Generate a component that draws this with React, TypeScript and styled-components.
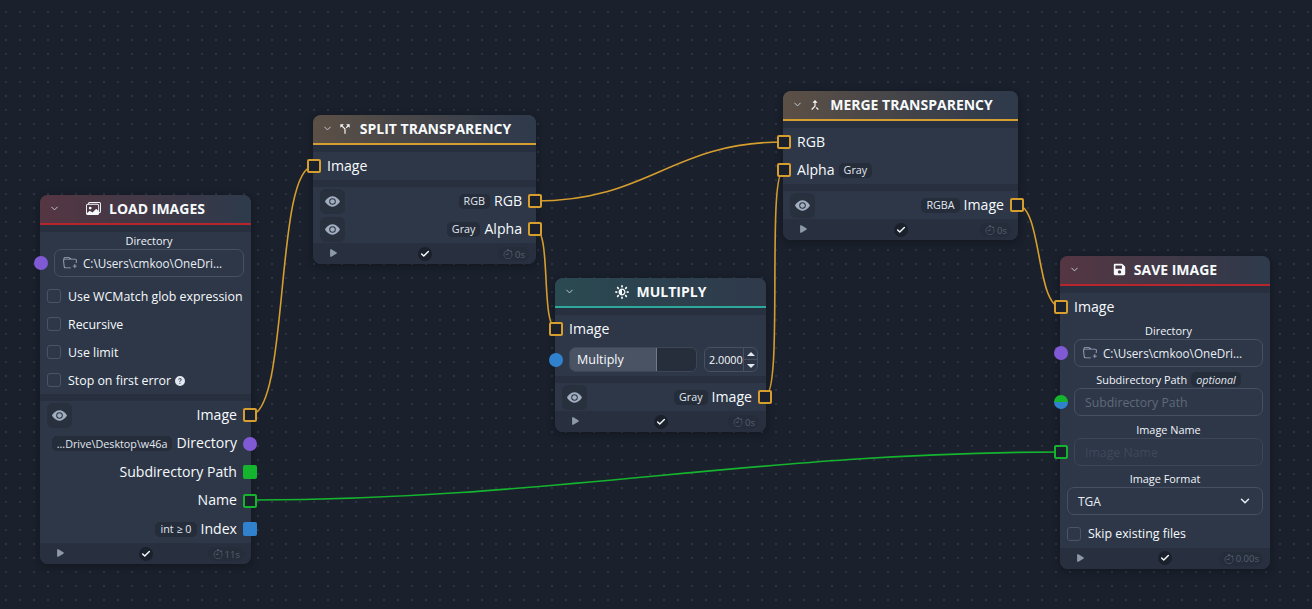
import React from "react";
import styled, { createGlobalStyle } from "styled-components";
import { ChevronDown, Play, Check } from "lucide-react";
import { BsFolderPlus, BsEyeFill, BsStopwatch, BsImages, BsQuestionCircleFill } from "react-icons/bs";
import { MdCallSplit, MdCallMerge } from "react-icons/md";
import { ImBrightnessContrast } from "react-icons/im";
import { FaSave } from "react-icons/fa";

const Global = createGlobalStyle`
  html, body { margin: 0; padding: 0; width: 1312px; height: 609px; overflow: hidden; background: #1a202c; }
  * { box-sizing: border-box; }
`;

const Canvas = styled.div`
  position: relative;
  width: 1312px;
  height: 609px;
  overflow: hidden;
  font-family: "Open Sans", "Liberation Sans", sans-serif;
  color: #f7fafc;
  background-color: #1a202c;
  background-image: radial-gradient(circle at 1px 1px, #333b49 0.6px, transparent 1px);
  background-size: 14px 14px;
  background-position: 5px 11px;
`;

const Wires = styled.svg`
  position: absolute;
  inset: 0;
  width: 1312px;
  height: 609px;
`;

const Node = styled.div<{ $x: number; $y: number; $w: number }>`
  position: absolute;
  left: ${(p) => p.$x}px;
  top: ${(p) => p.$y}px;
  width: ${(p) => p.$w}px;
  display: flex;
  flex-direction: column;
  background: #2d3748;
  border-radius: 8px;
  box-shadow: 0 2px 8px rgba(0, 0, 0, 0.3);
`;

const Header = styled.div<{ $accent: string; $tint: string }>`
  position: relative;
  height: 30px;
  display: flex;
  align-items: center;
  justify-content: center;
  gap: 8px;
  padding-bottom: 1px;
  border-radius: 8px 8px 0 0;
  border-bottom: 2px solid ${(p) => p.$accent};
  background: linear-gradient(90deg, ${(p) => p.$tint} 0%, #2f3a4b 95%);
  font-weight: 700;
  font-size: 14px;
`;

const Collapse = styled.span`
  position: absolute;
  left: 9px;
  top: 8px;
  display: flex;
  color: #cbd5e0;
`;

const Gap = styled.div`
  height: 7px;
  background: #28303f;
`;

const Section = styled.div`
  display: flex;
  flex-direction: column;
`;

const Row = styled.div<{ $h?: number; $right?: boolean }>`
  position: relative;
  height: ${(p) => p.$h ?? 28}px;
  display: flex;
  align-items: center;
  justify-content: ${(p) => (p.$right ? "flex-end" : "flex-start")};
  gap: 4px;
  padding: 0 14px 2px;
  font-size: 14.1px;
  white-space: nowrap;
`;

const SliderRow = styled.div`
  position: relative;
  height: 33px;
  display: flex;
  align-items: center;
  gap: 7px;
  padding: 0 7px 0 14px;
`;

const Chip = styled.span`
  height: 15px;
  display: inline-flex;
  align-items: center;
  margin-top: 2px;
  padding: 0 5px;
  border-radius: 5px;
  background: #252c3a;
  color: #e2e8f0;
  font-size: 10.75px;
  white-space: nowrap;
`;

const Optional = styled(Chip)`
  margin-top: 0;
  font-style: italic;
`;

const Handle = styled.span<{ $side: "left" | "right"; $color: string; $hollow?: boolean; $round?: boolean; $split?: boolean }>`
  position: absolute;
  top: 50%;
  ${(p) => p.$side}: -6px;
  width: 14px;
  height: 14px;
  margin-top: -7px;
  border-radius: ${(p) => (p.$round ? "50%" : "2px")};
  background: ${(p) =>
    p.$split
      ? "linear-gradient(180deg, #15b42e 50%, #3182ce 50%)"
      : p.$hollow
        ? "#1a202c"
        : p.$color};
  border: ${(p) => (p.$hollow ? `2px solid ${p.$color}` : "none")};
`;

const EyeButton = styled.span`
  width: 25px;
  height: 25px;
  display: flex;
  align-items: center;
  justify-content: center;
  border-radius: 6px;
  background: #282f3d;
  color: #a0aec0;
  margin: 2px auto 0 -7px;
`;

const Footer = styled.div`
  position: relative;
  height: 21px;
  display: flex;
  align-items: center;
  justify-content: center;
  background: #28303f;
  border-radius: 0 0 8px 8px;
`;

const PlayMark = styled.span`
  position: absolute;
  left: 15px;
  top: 5px;
  display: flex;
  color: #8d98a8;
`;

const Done = styled.span`
  width: 14px;
  height: 14px;
  display: flex;
  align-items: center;
  justify-content: center;
  border-radius: 50%;
  background: #1a202c;
  color: #f7fafc;
`;

const Time = styled.span`
  position: absolute;
  right: 7px;
  top: 4px;
  height: 14px;
  display: flex;
  align-items: center;
  gap: 2px;
  padding: 0 4px 0 5px;
  border-radius: 7px;
  background: #252c3a;
  color: #566070;
  font-size: 9.5px;
`;

const FieldLabel = styled.div<{ $top?: number; $wide?: boolean }>`
  height: 17px;
  margin-top: ${(p) => p.$top ?? 0}px;
  padding-left: ${(p) => (p.$wide ? 0 : 7)}px;
  display: flex;
  align-items: center;
  justify-content: center;
  gap: 4px;
  font-size: 10.9px;
  color: #f1f5f9;
`;

const Field = styled.div<{ $dim?: boolean }>`
  position: relative;
  height: 28px;
  margin: 0 7px 0 14px;
  display: flex;
  align-items: center;
  gap: 6px;
  padding: 0 8px;
  border: 1px solid #465062;
  border-radius: 7px;
  font-size: 11.7px;
  color: #e8edf3;
  opacity: ${(p) => (p.$dim ? 0.6 : 1)};
`;

const FolderIcon = styled(BsFolderPlus)`
  flex: none;
  color: #a0aec0;
`;

const Placeholder = styled.span<{ $faint?: boolean }>`
  padding-left: 2px;
  font-size: 12.3px;
  color: ${(p) => (p.$faint ? "#4a5566" : "#5f6a7a")};
`;

const Wrap = styled.div`
  position: relative;
`;

const CheckRow = styled.div<{ $top?: number; $h?: number }>`
  height: ${(p) => p.$h ?? 28}px;
  margin-top: ${(p) => p.$top ?? 0}px;
  display: flex;
  align-items: center;
  gap: 7px;
  padding-left: 7px;
  font-size: 12.38px;
  white-space: nowrap;
`;

const Box = styled.span`
  width: 14px;
  height: 14px;
  border: 1.5px solid #4a5466;
  border-radius: 3px;
  flex: none;
`;

const Slider = styled.div`
  width: 128px;
  height: 25px;
  flex: none;
  display: flex;
  border: 1px solid #3d4656;
  border-radius: 6px;
  overflow: hidden;
  background: #272e3b;
  font-size: 12.5px;
`;

const SliderFill = styled.div`
  width: 87px;
  display: flex;
  align-items: center;
  padding-left: 7px;
  background: #4a5364;
  border-right: 1px solid #717a88;
`;

const NumberBox = styled.div`
  width: 54px;
  height: 25px;
  flex: none;
  display: flex;
  align-items: center;
  justify-content: space-between;
  padding-left: 4px;
  border: 1px solid #465062;
  border-radius: 6px;
  font-size: 10.8px;
`;

const Stepper = styled.div`
  width: 14px;
  height: 100%;
  display: flex;
  flex-direction: column;
  border-left: 1px solid #465062;
`;

const Step = styled.span`
  flex: 1;
  display: flex;
  align-items: center;
  justify-content: center;
  & + & {
    border-top: 1px solid #465062;
  }
`;

const Up = styled.span`
  width: 0;
  height: 0;
  border-left: 4px solid transparent;
  border-right: 4px solid transparent;
  border-bottom: 4px solid #e2e8f0;
`;

const Down = styled(Up)`
  border-bottom: 0;
  border-top: 4px solid #e2e8f0;
`;

const SelectBox = styled(Field)`
  margin-left: 7px;
  padding: 0 10px;
  justify-content: space-between;
  font-size: 12px;
`;

const Help = styled.span`
  display: inline-flex;
  margin-left: 4px;
  vertical-align: -1px;
  color: #e2e8f0;
`;

const OrangeHeader = { $accent: "#d69e2e", $tint: "#5c5046" };
const RedHeader = { $accent: "#b7262d", $tint: "#553642" };
const TealHeader = { $accent: "#2ea89a", $tint: "#2a4a52" };

function NodeFoot({ time }: { time: string }) {
  return (
    <Footer>
      <PlayMark><Play size={10} fill="currentColor" strokeWidth={0} /></PlayMark>
      <Done><Check size={10} strokeWidth={3.5} /></Done>
      <Time><BsStopwatch size={10} />{time}</Time>
    </Footer>
  );
}

function Title({ icon, text }: { icon: React.ReactNode; text: string }) {
  return (
    <>
      <Collapse><ChevronDown size={11} /></Collapse>
      {icon}
      <span>{text}</span>
    </>
  );
}

const Seen = () => <EyeButton><BsEyeFill size={15} /></EyeButton>;

const O = "#d69e2e";
const G = "#15b42e";
const P = "#805ad5";
const B = "#3182ce";

export default function App() {
  return (
    <Canvas>
      <Global />
      <Wires viewBox="0 0 1312 609" fill="none">
        <g stroke={O} strokeWidth="1.6">
          <path d="M250 415 C290 415 274 166 314 166" />
          <path d="M535 201 C650 201 670 142 784 142" />
          <path d="M535 229 C552 229 540 329 557 329" />
          <path d="M765 396 C784 396 766 170 784 170" />
          <path d="M1017 205 C1042 205 1036 307 1061 307" />
        </g>
        <path d="M250 500 C550 500 760 452 1061 452" stroke={G} strokeWidth="1.6" />
      </Wires>

      <Node $x={40} $y={195} $w={211}>
        <Header {...RedHeader}>
          <Title icon={<BsImages size={15} />} text="LOAD IMAGES" />
        </Header>
        <Gap />
        <Section>
          <FieldLabel>Directory</FieldLabel>
          <Wrap>
            <Handle $side="left" $color={P} $round />
            <Field>
              <FolderIcon size={14} />
              <span>C:\Users\cmkoo\OneDri...</span>
            </Field>
          </Wrap>
          <CheckRow $top={5}><Box />Use WCMatch glob expression</CheckRow>
          <CheckRow><Box />Recursive</CheckRow>
          <CheckRow><Box />Use limit</CheckRow>
          <CheckRow>
            <Box />
            <span>Stop on first error<Help><BsQuestionCircleFill size={10} /></Help></span>
          </CheckRow>
        </Section>
        <Gap />
        <Section>
          <Row $right $h={28.5}>
            <Seen />
            Image
            <Handle $side="right" $color={O} $hollow />
          </Row>
          <Row $right $h={28.5}><Chip>...Drive\Desktop\w46a</Chip>Directory<Handle $side="right" $color={P} $round /></Row>
          <Row $right $h={28.5}>Subdirectory Path<Handle $side="right" $color={G} /></Row>
          <Row $right $h={28.5}>Name<Handle $side="right" $color={G} $hollow /></Row>
          <Row $right $h={28}><Chip>int ≥ 0</Chip>Index<Handle $side="right" $color={B} /></Row>
        </Section>
        <NodeFoot time="11s" />
      </Node>

      <Node $x={313} $y={115} $w={223}>
        <Header {...OrangeHeader}>
          <Title icon={<MdCallSplit size={14} />} text="SPLIT TRANSPARENCY" />
        </Header>
        <Gap />
        <Row>Image<Handle $side="left" $color={O} $hollow /></Row>
        <Gap />
        <Row $right><Seen /><Chip>RGB</Chip>RGB<Handle $side="right" $color={O} $hollow /></Row>
        <Row $right><Seen /><Chip>Gray</Chip>Alpha<Handle $side="right" $color={O} $hollow /></Row>
        <NodeFoot time="0s" />
      </Node>

      <Node $x={555} $y={278} $w={211}>
        <Header {...TealHeader}>
          <Title icon={<ImBrightnessContrast size={14} />} text="MULTIPLY" />
        </Header>
        <Gap />
        <Section>
          <Row>Image<Handle $side="left" $color={O} $hollow /></Row>
          <SliderRow>
            <Handle $side="left" $color={B} $round />
            <Slider><SliderFill>Multiply</SliderFill></Slider>
            <NumberBox>
              2.0000
              <Stepper>
                <Step><Up /></Step>
                <Step><Down /></Step>
              </Stepper>
            </NumberBox>
          </SliderRow>
        </Section>
        <Gap />
        <Row $right><Seen /><Chip>Gray</Chip>Image<Handle $side="right" $color={O} $hollow /></Row>
        <NodeFoot time="0s" />
      </Node>

      <Node $x={783} $y={91} $w={235}>
        <Header {...OrangeHeader}>
          <Title icon={<MdCallMerge size={14} />} text="MERGE TRANSPARENCY" />
        </Header>
        <Gap />
        <Row>RGB<Handle $side="left" $color={O} $hollow /></Row>
        <Row>Alpha<Chip>Gray</Chip><Handle $side="left" $color={O} $hollow /></Row>
        <Gap />
        <Row $right><Seen /><Chip>RGBA</Chip>Image<Handle $side="right" $color={O} $hollow /></Row>
        <NodeFoot time="0s" />
      </Node>

      <Node $x={1060} $y={256} $w={210}>
        <Header {...RedHeader}>
          <Title icon={<FaSave size={13} />} text="SAVE IMAGE" />
        </Header>
        <Gap />
        <Row>Image<Handle $side="left" $color={O} $hollow /></Row>
        <FieldLabel $top={1}>Directory</FieldLabel>
        <Wrap>
          <Handle $side="left" $color={P} $round />
          <Field>
            <FolderIcon size={14} />
            <span>C:\Users\cmkoo\OneDri...</span>
          </Field>
        </Wrap>
        <FieldLabel $top={4}>Subdirectory Path<Optional>optional</Optional></FieldLabel>
        <Wrap>
          <Handle $side="left" $color={G} $round $split />
          <Field><Placeholder>Subdirectory Path</Placeholder></Field>
        </Wrap>
        <FieldLabel $top={5}>Image Name</FieldLabel>
        <Wrap>
          <Handle $side="left" $color={G} $hollow />
          <Field $dim><Placeholder $faint>Image Name</Placeholder></Field>
        </Wrap>
        <FieldLabel $top={4} $wide>Image Format</FieldLabel>
        <SelectBox>TGA<ChevronDown size={14} strokeWidth={2.5} /></SelectBox>
        <CheckRow $top={5} $h={27.5}><Box />Skip existing files</CheckRow>
        <NodeFoot time="0.00s" />
      </Node>
    </Canvas>
  );
}
